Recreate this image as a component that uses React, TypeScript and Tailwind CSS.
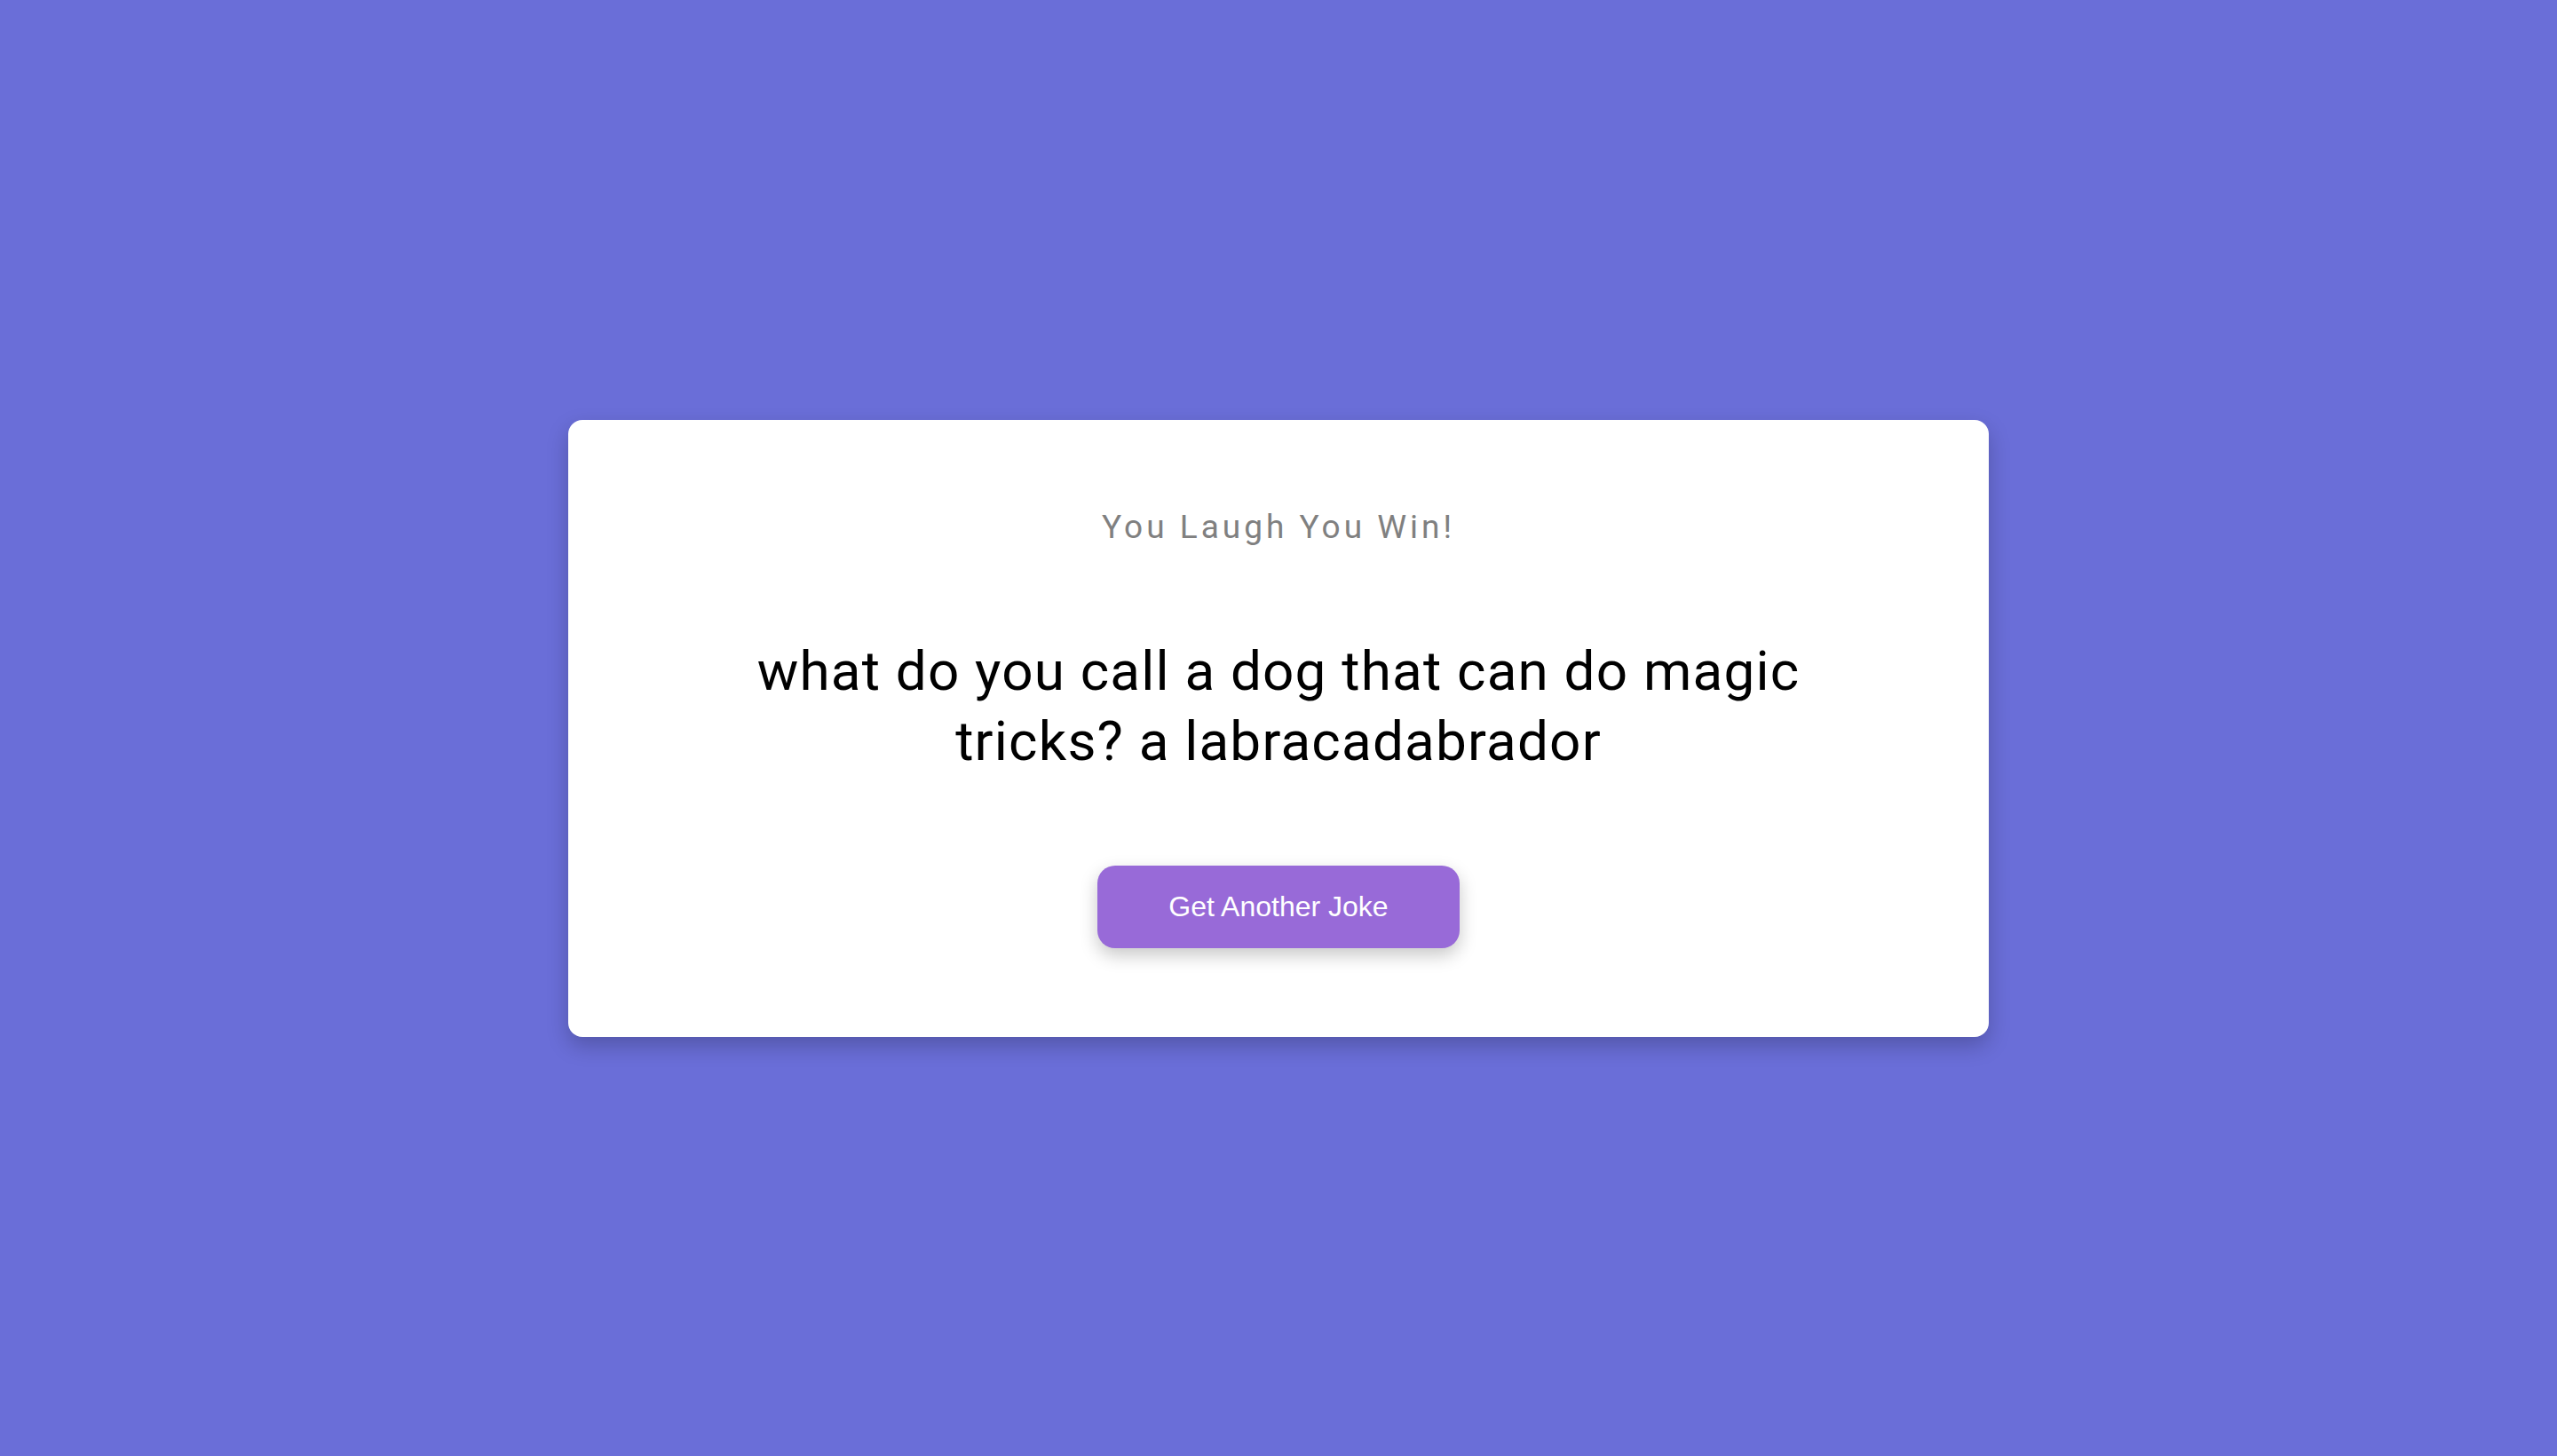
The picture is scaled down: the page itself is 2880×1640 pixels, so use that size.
export default function App() {
  return (
    <div className="min-h-screen w-full bg-[#6a6ed8] flex items-center justify-center font-['Roboto',sans-serif]">
      <div className="w-[1600px] bg-white rounded-2xl shadow-[0_10px_24px_rgba(0,0,0,0.22)] px-[100px] pt-[100px] pb-[100px] flex flex-col items-center text-center">
        <h1 className="text-[37px] leading-[42px] tracking-[4px] text-[#808080] font-normal">
          You Laugh You Win!
        </h1>
        <p className="mt-[101px] max-w-[1240px] text-[62px] leading-[79px] tracking-[1.2px] text-black">
          what do you call a dog that can do magic tricks? a labracadabrador
        </p>
        <button className="mt-[101px] w-[408px] h-[93px] rounded-[20px] bg-[#986ad8] text-white text-[32px] font-['Liberation_Sans',Arial,sans-serif] shadow-[0_8px_20px_rgba(0,0,0,0.22)]">
          Get Another Joke
        </button>
      </div>
    </div>
  );
}
